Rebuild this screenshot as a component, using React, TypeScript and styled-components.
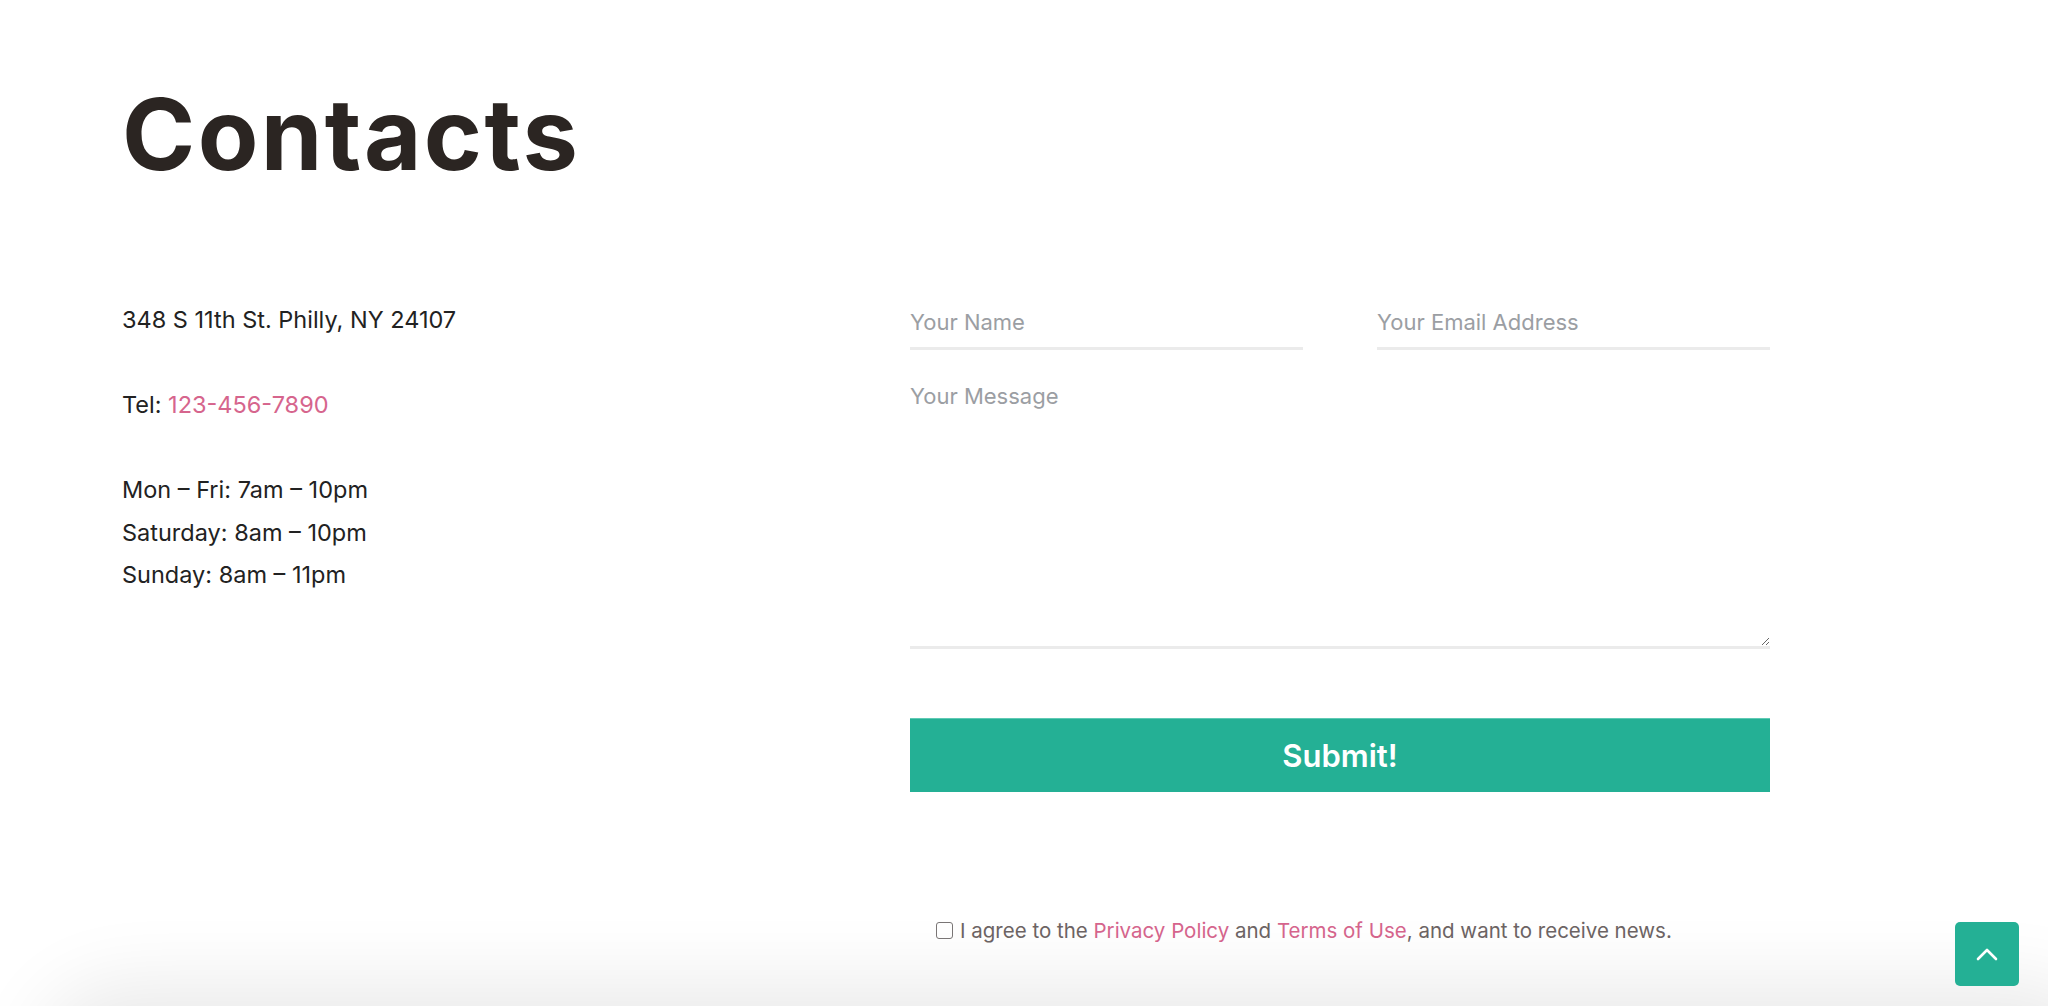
import React from "react";
import styled, { createGlobalStyle } from "styled-components";

const Global = createGlobalStyle`
  html, body { margin: 0; padding: 0; background: #ffffff; }
  body { font-family: Inter, "Noto Sans", sans-serif; overflow: hidden; }
  * { box-sizing: border-box; }
`;

const Page = styled.main`
  width: 2048px;
  height: 1006px;
  padding: 74px 0 0 122px;
  background: #ffffff;
`;

const Title = styled.h1`
  margin: 0;
  font-family: Inter, sans-serif;
  font-weight: 700;
  font-size: 99px;
  line-height: 120px;
  letter-spacing: 2.4px;
  color: #2b2522;
`;

const Columns = styled.div`
  display: grid;
  grid-template-columns: 788px 860px;
  margin-top: 102px;
`;

const Info = styled.div`
  display: flex;
  flex-direction: column;
  gap: 42.5px;
  padding-top: 3px;
  font-size: 23.5px;
  line-height: 42.5px;
  color: #222222;
`;

const InfoBlock = styled.p`
  margin: 0;
`;

const Pink = styled.a`
  color: #d6658d;
  text-decoration: none;
`;

const Form = styled.form`
  display: flex;
  flex-direction: column;
`;

const Row = styled.div`
  display: grid;
  grid-template-columns: 393px 393px;
  justify-content: space-between;
`;

const Field = styled.input`
  height: 54px;
  width: 100%;
  padding: 0;
  border: none;
  border-bottom: 3px solid #ebebeb;
  outline: none;
  background: transparent;
  font-family: Inter, sans-serif;
  font-size: 22px;
  color: #222;
  &::placeholder { color: #9b9ea3; }
`;

const Message = styled.textarea`
  margin-top: 18px;
  height: 281px;
  width: 100%;
  padding: 14px 0 0;
  border: none;
  border-bottom: 3px solid #ebebeb;
  outline: none;
  resize: vertical;
  background: transparent;
  font-family: Inter, sans-serif;
  font-size: 22px;
  line-height: 28px;
  color: #222;
  &::placeholder { color: #9b9ea3; }
`;

const Submit = styled.button`
  margin-top: 69px;
  height: 74px;
  width: 100%;
  border: none;
  border-top: 1px solid #5fcab4;
  background: #24b095;
  color: #ffffff;
  font-family: Inter, sans-serif;
  font-weight: 600;
  font-size: 31px;
  cursor: pointer;
`;

const Consent = styled.label`
  margin-top: 126px;
  display: flex;
  align-items: center;
  gap: 7px;
  padding-left: 26px;
  font-size: 20.5px;
  color: #6d6464;
`;

const Check = styled.input`
  appearance: none;
  margin: 0;
  width: 17px;
  height: 17px;
  border: 1.5px solid #7a7676;
  border-radius: 3px;
  background: #fff;
  flex: none;
`;

const BottomShade = styled.div`
  position: fixed;
  left: 60px;
  right: -40px;
  bottom: -120px;
  height: 120px;
  border-radius: 60px;
  box-shadow: 0 0 80px 20px rgba(0, 0, 0, 0.09);
  pointer-events: none;
`;

const ToTop = styled.button`
  position: fixed;
  right: 29px;
  bottom: 20px;
  width: 64px;
  height: 64px;
  border: none;
  border-radius: 5px;
  background: #24b095;
  display: flex;
  align-items: center;
  justify-content: center;
  padding: 0;
`;

export default function App() {
  return (
    <>
      <Global />
      <Page>
        <Title>Contacts</Title>
        <Columns>
          <Info>
            <InfoBlock>348 S 11th St. Philly, NY 24107</InfoBlock>
            <InfoBlock>
              Tel: <Pink href="#">123-456-7890</Pink>
            </InfoBlock>
            <InfoBlock>
              Mon – Fri: 7am – 10pm
              <br />
              Saturday: 8am – 10pm
              <br />
              Sunday: 8am – 11pm
            </InfoBlock>
          </Info>
          <Form onSubmit={(e) => e.preventDefault()}>
            <Row>
              <Field placeholder="Your Name" />
              <Field placeholder="Your Email Address" />
            </Row>
            <Message placeholder="Your Message" />
            <Submit type="submit">Submit!</Submit>
            <Consent>
              <Check type="checkbox" />
              <span>
                I agree to the <Pink href="#">Privacy Policy</Pink> and{" "}
                <Pink href="#">Terms of Use</Pink>, and want to receive news.
              </span>
            </Consent>
          </Form>
        </Columns>
      </Page>
      <BottomShade />
      <ToTop aria-label="Back to top">
        <svg width="22" height="14" viewBox="0 0 22 14" fill="none">
          <path d="M2 12 L11 3 L20 12" stroke="#fff" strokeWidth="2.6" strokeLinecap="round" strokeLinejoin="round" />
        </svg>
      </ToTop>
    </>
  );
}
